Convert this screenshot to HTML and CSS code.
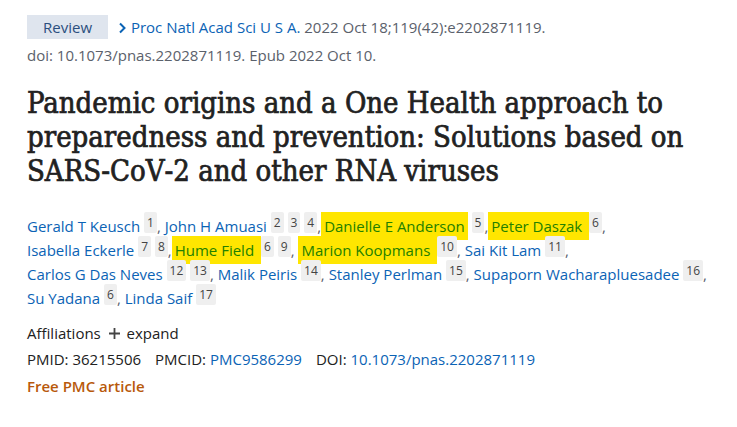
FILE: index.html
```html
<!DOCTYPE html>
<html>
<head>
<meta charset="utf-8">
<link rel="stylesheet" href="styles.css">
</head>
<body>
<main class="article">
  <div class="citation"><span class="badge">Review</span><span class="journal"><svg class="chev" width="9" height="12" viewBox="0 0 9 12"><path d="M2 1.5 L6.5 6 L2 10.5" fill="none" stroke="#0b63b5" stroke-width="2"/></svg> Proc Natl Acad Sci U S A.</span> 2022 Oct 18;119(42):e2202871119.</div>
  <div class="doi-line">doi: 10.1073/pnas.2202871119. Epub 2022 Oct 10.</div>
  <h1 class="title">Pandemic origins and a One Health approach to preparedness and prevention: Solutions based on SARS‑CoV‑2 and other RNA viruses</h1>
  <div class="authors">
    <span class="au"><a class="name">Gerald T Keusch</a> <sup class="ref">1</sup>,</span>
    <span class="au"><a class="name">John H Amuasi</a> <sup class="ref">2</sup> <sup class="ref">3</sup> <sup class="ref">4</sup>,</span><span class="au"><a class="name hl">Danielle E Anderson</a> <sup class="ref">5</sup>,</span><span class="au"><a class="name hl">Peter Daszak&nbsp;</a><sup class="ref">6</sup>,</span>
    <span class="au"><a class="name">Isabella Eckerle</a> <sup class="ref">7</sup> <sup class="ref">8</sup>,</span><span class="au"><a class="name hl">Hume Field&nbsp;</a><sup class="ref">6</sup> <sup class="ref">9</sup>,</span>
    <span class="au"><a class="name hl">Marion Koopmans&nbsp;</a><sup class="ref">10</sup>,</span>
    <span class="au"><a class="name">Sai Kit Lam</a> <sup class="ref">11</sup>,</span>
    <span class="au"><a class="name">Carlos G Das Neves</a> <sup class="ref">12</sup> <sup class="ref">13</sup>,</span>
    <span class="au"><a class="name">Malik Peiris</a> <sup class="ref">14</sup>,</span>
    <span class="au"><a class="name">Stanley Perlman</a> <sup class="ref">15</sup>,</span>
    <span class="au"><a class="name">Supaporn Wacharapluesadee</a> <sup class="ref">16</sup>,</span>
    <span class="au"><a class="name">Su Yadana</a> <sup class="ref">6</sup>,</span>
    <span class="au"><a class="name">Linda Saif</a> <sup class="ref">17</sup></span>
  </div>
  <div class="affil">Affiliations <span class="plus"><svg width="11" height="11" viewBox="0 0 11 11"><path d="M5.5 0 V11 M0 5.5 H11" stroke="#444" stroke-width="1.8"/></svg></span> expand</div>
  <div class="ids">
    <span class="id">PMID: 36215506</span>
    <span class="id">PMCID: <a class="link">PMC9586299</a></span>
    <span class="id">DOI: <a class="link">10.1073/pnas.2202871119</a></span>
  </div>
  <div class="free">Free PMC article</div>
</main>
</body>
</html>
```
FILE: styles.css
```css
html, body {
  margin: 0;
  padding: 0;
  background: #ffffff;
}
body {
  font-family: "Open Sans", "Noto Sans", sans-serif;
  color: #212121;
}
.article {
  padding: 15px 30px 0 27px;
}
.citation {
  font-size: 15px;
  line-height: 24px;
  color: #5b616b;
  white-space: nowrap;
}
.badge {
  display: inline-block;
  background: #dfe5ee;
  color: #2b4f7e;
  padding: 0 16px;
  height: 24px;
  line-height: 24px;
  margin-right: 10px;
}
.journal {
  color: #0b63b5;
}
.chev {
  vertical-align: -1px;
}
.doi-line {
  font-size: 15px;
  line-height: 24px;
  color: #5b616b;
  margin-top: 4px;
}
.title {
  font-family: "DejaVu Serif Condensed", "Liberation Serif", serif;
  font-weight: normal;
  font-size: 29px;
  line-height: 34px;
  color: #212121;
  -webkit-text-stroke: 0.7px #212121;
  margin: 19px 0 26px;
}
.authors {
  font-size: 15px;
  line-height: 24px;
  color: #5b616b;
}
.au {
  white-space: nowrap;
}
.name {
  color: #0b63b5;
}
.name.hl {
  background: #ffe600;
  color: #238000;
  padding: 4px 3px;
}
.ref {
  font-size: 12px;
  line-height: 1;
  background: #efefef;
  color: #444;
  padding: 2px 3px;
  border-radius: 2px;
  vertical-align: 5px;
}
.affil {
  font-size: 15px;
  line-height: 26px;
  color: #212121;
  margin-top: 10px;
}
.plus {
  margin: 0 3px 0 4px;
}
.ids {
  font-size: 15px;
  line-height: 26px;
  display: flex;
  gap: 14px;
}
.link {
  color: #0b63b5;
}
.free {
  font-size: 15px;
  line-height: 28px;
  color: #b8590b;
  font-weight: 600;
}
```
